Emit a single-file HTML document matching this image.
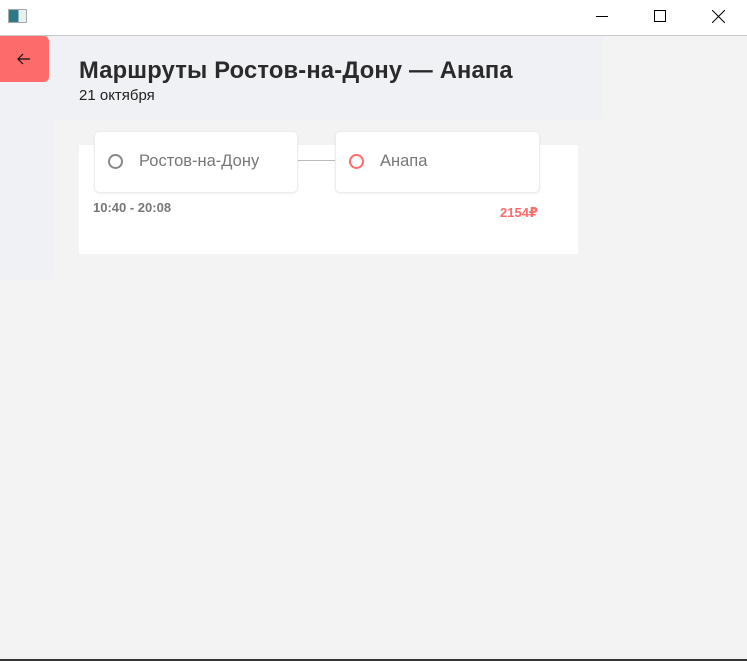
<!DOCTYPE html>
<html><head><meta charset="utf-8"><style>
*{margin:0;padding:0;box-sizing:border-box}
body{width:747px;height:661px;background:#f3f3f3;font-family:"Liberation Sans","DejaVu Sans",sans-serif;position:relative;overflow:hidden}
.tb{position:absolute;left:0;top:0;width:747px;height:36px;background:#fff;border-bottom:1px solid #c8c8c8}
.panel{position:absolute;left:0;top:36px;width:603px;height:243px;background:#f0f1f5}
.back{position:absolute;left:0;top:36px;width:49px;height:46px;background:#fe6b6b;border-radius:0 5px 5px 0}
.inner{position:absolute;left:53px;top:119px;width:550px;height:160px;background:#f3f3f4}
.card{position:absolute;left:79px;top:145px;width:499px;height:109px;background:#fff}
.box{position:absolute;top:131px;height:62px;background:#fff;border:1px solid #ececec;border-radius:5px;box-shadow:0 1px 2px rgba(0,0,0,.06)}
.circ{position:absolute;left:13px;top:22px;width:15px;height:15px;border-radius:50%;border:2px solid #888}
.lbl{position:absolute;left:44px;top:20px;font-size:16.5px;color:#777}
</style></head><body>
<div class="tb">
<div style="position:absolute;left:8px;top:9px;width:19px;height:14px;border:1px solid #aaa;background:linear-gradient(90deg,#2a7a8a 0 55%,#e8f0f0 55%)"></div>
<div style="position:absolute;left:596px;top:16px;width:12px;height:1px;background:#000"></div>
<div style="position:absolute;left:654px;top:10px;width:12px;height:12px;border:1px solid #000"></div>
<svg style="position:absolute;left:712px;top:10px" width="13" height="13"><path d="M0 0L13 13M13 0L0 13" stroke="#000" stroke-width="1"/></svg>
</div>
<div class="panel"></div>
<div class="back"><svg style="position:absolute;left:17px;top:17px" width="14" height="12"><path d="M13 6H1M6 1L1 6L6 11" stroke="#111" stroke-width="1.2" fill="none"/></svg></div>
<div style="position:absolute;left:79px;top:58px;font-size:23.7px;font-weight:bold;color:#2a2a2a;letter-spacing:0.2px">Маршруты Ростов-на-Дону — Анапа</div>
<div style="position:absolute;left:79px;top:87px;font-size:15px;color:#222">21 октября</div>
<div class="inner"></div>
<div class="card"></div>
<div style="position:absolute;left:298px;top:160px;width:37px;height:1px;background:#bbb"></div>
<div class="box" style="left:94px;width:204px"><div class="circ"></div><div class="lbl">Ростов-на-Дону</div></div>
<div class="box" style="left:335px;width:205px"><div class="circ" style="border-color:#fe6b6b"></div><div class="lbl">Анапа</div></div>
<div style="position:absolute;left:93px;top:200px;font-size:13px;font-weight:bold;color:#777">10:40 - 20:08</div>
<div style="position:absolute;left:500px;top:205px;font-size:13px;font-weight:bold;color:#fe6b6b">2154₽</div>
<div style="position:absolute;left:0;top:659px;width:747px;height:2px;background:#333"></div>
</body></html>
